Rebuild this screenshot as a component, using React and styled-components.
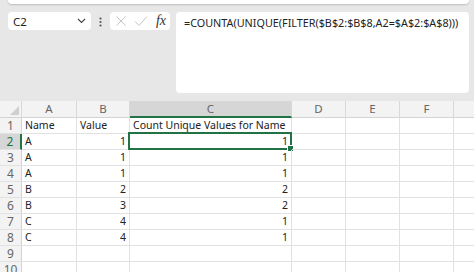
import styled, { createGlobalStyle } from "styled-components";

const GlobalStyle = createGlobalStyle`
  body {
    margin: 0;
    background: #ffffff;
    font-family: "Noto Sans", "Open Sans", sans-serif;
  }
`;

const Window = styled.div`
  width: 474px;
  height: 272px;
  overflow: hidden;
  background: #ffffff;
`;

const TopArea = styled.div`
  background: #e7e7e7;
  height: 101px;
  padding: 0 5px 0 8px;
  box-sizing: border-box;
`;

const RibbonEdge = styled.div`
  height: 4px;
  background: #ffffff;
  border-radius: 0 0 6px 6px;
  box-shadow: 0 1px 2px rgba(0, 0, 0, 0.18);
`;

const Bar = styled.div`
  display: flex;
  align-items: flex-start;
  margin-top: 8px;
`;

const NameBox = styled.div`
  flex: 0 0 83px;
  height: 18px;
  background: #ffffff;
  border-radius: 4px;
  display: flex;
  align-items: center;
  justify-content: space-between;
  padding: 0 5px 0 5px;
  box-sizing: border-box;
  font-size: 11.5px;
  color: #222;
`;

const Dots = styled.div`
  flex: 0 0 19px;
  display: flex;
  justify-content: center;
  padding-top: 5px;
`;

const FxBox = styled.div`
  flex: 0 0 60px;
  height: 18px;
  background: #ffffff;
  border-radius: 4px;
  display: flex;
  align-items: center;
  justify-content: space-between;
  padding: 0 4px 0 5px;
  box-sizing: border-box;
`;

const Fx = styled.span`
  font-family: "Liberation Serif", "DejaVu Serif", serif;
  font-style: italic;
  font-size: 14px;
  color: #333;
  line-height: 1;
`;

const FormulaBox = styled.div`
  flex: 1;
  min-width: 0;
  margin-left: 6px;
  height: 81px;
  background: #ffffff;
  border-radius: 4px;
  padding: 3px 8px;
  box-sizing: border-box;
  font-size: 10.8px;
  color: #222;
  white-space: nowrap;
  overflow: hidden;
`;

const Grid = styled.div`
  display: grid;
  grid-template-columns: 22px 55px 53px 162px 54px 54px 54px 60px;
  grid-auto-rows: 16px;
  grid-template-rows: 17px;
`;

const Cell = styled.div`
  position: relative;
  border-right: 1px solid #e2e2e2;
  border-bottom: 1px solid #e2e2e2;
  box-sizing: border-box;
  font-size: 10.5px;
  line-height: 15px;
  color: #222;
  padding: 0 3px;
  text-align: ${(p) => (p.$num ? "right" : "left")};
  white-space: nowrap;
  overflow: visible;
`;

const ColHead = styled(Cell)`
  background: ${(p) => (p.$active ? "#d6d6d6" : "#f3f3f3")};
  border-right-color: #d9d9d9;
  border-bottom: ${(p) => (p.$active ? "2px solid #217346" : "1px solid #d4d4d4")};
  color: #666;
  text-align: center;
  font-size: 11.5px;
  line-height: 16px;
`;

const RowHead = styled(Cell)`
  background: ${(p) => (p.$active ? "#d6d6d6" : "#f3f3f3")};
  border-right: ${(p) => (p.$active ? "2px solid #217346" : "1px solid #d4d4d4")};
  border-bottom-color: #e2e2e2;
  color: ${(p) => (p.$active ? "#217346" : "#666")};
  text-align: center;
  font-size: 12px;
  padding: 0;
`;

const Corner = styled(ColHead)`
  overflow: hidden;
  &::after {
    content: "";
    position: absolute;
    right: 2px;
    bottom: 2px;
    border-left: 9px solid transparent;
    border-bottom: 9px solid #cfcfcf;
  }
`;

const Selection = styled.div`
  position: absolute;
  left: -2px;
  top: -2px;
  right: -1px;
  bottom: -1px;
  border: 2px solid #217346;
  pointer-events: none;
  &::after {
    content: "";
    position: absolute;
    right: -4px;
    bottom: -4px;
    width: 5px;
    height: 5px;
    background: #217346;
    border: 1px solid #fff;
  }
`;

const columns = ["A", "B", "C", "D", "E", "F", "G"];

const rows = [
  ["Name", "Value", "Count Unique Values for Name"],
  ["A", 1, 1],
  ["A", 1, 1],
  ["A", 1, 1],
  ["B", 2, 2],
  ["B", 3, 2],
  ["C", 4, 1],
  ["C", 4, 1],
  ["", "", ""],
  ["", "", ""],
];

export default function App() {
  return (
    <Window>
      <GlobalStyle />
      <TopArea>
        <RibbonEdge />
        <Bar>
          <NameBox>
            <span>C2</span>
            <svg width="9" height="6" viewBox="0 0 9 6">
              <path d="M1 1l3.5 3.5L8 1" fill="none" stroke="#444" strokeWidth="1.1" />
            </svg>
          </NameBox>
          <Dots>
            <svg width="3" height="10" viewBox="0 0 3 10">
              <circle cx="1.5" cy="1.5" r="1.1" fill="#555" />
              <circle cx="1.5" cy="5" r="1.1" fill="#555" />
              <circle cx="1.5" cy="8.5" r="1.1" fill="#555" />
            </svg>
          </Dots>
          <FxBox>
            <svg width="12" height="12" viewBox="0 0 12 12">
              <path d="M1.5 1.5l9 9M10.5 1.5l-9 9" stroke="#c4c4c4" strokeWidth="1" />
            </svg>
            <svg width="14" height="12" viewBox="0 0 14 12">
              <path d="M1 6.5l4 4L13 1.5" fill="none" stroke="#c4c4c4" strokeWidth="1" />
            </svg>
            <Fx>fx</Fx>
          </FxBox>
          <FormulaBox>=COUNTA(UNIQUE(FILTER($B$2:$B$8,A2=$A$2:$A$8)))</FormulaBox>
        </Bar>
      </TopArea>
      <Grid>
        <Corner />
        {columns.map((c) => (
          <ColHead key={c} $active={c === "C"}>
            {c}
          </ColHead>
        ))}
        {rows.map((r, i) => (
          <Row key={i} index={i + 1} data={r} />
        ))}
      </Grid>
    </Window>
  );
}

function Row({ index, data }) {
  const isHeader = index === 1;
  return (
    <>
      <RowHead $active={index === 2}>{index}</RowHead>
      <Cell>{data[0]}</Cell>
      <Cell $num={!isHeader}>{data[1]}</Cell>
      <Cell $num={!isHeader}>
        {data[2]}
        {index === 2 && <Selection />}
      </Cell>
      <Cell />
      <Cell />
      <Cell />
      <Cell />
    </>
  );
}
